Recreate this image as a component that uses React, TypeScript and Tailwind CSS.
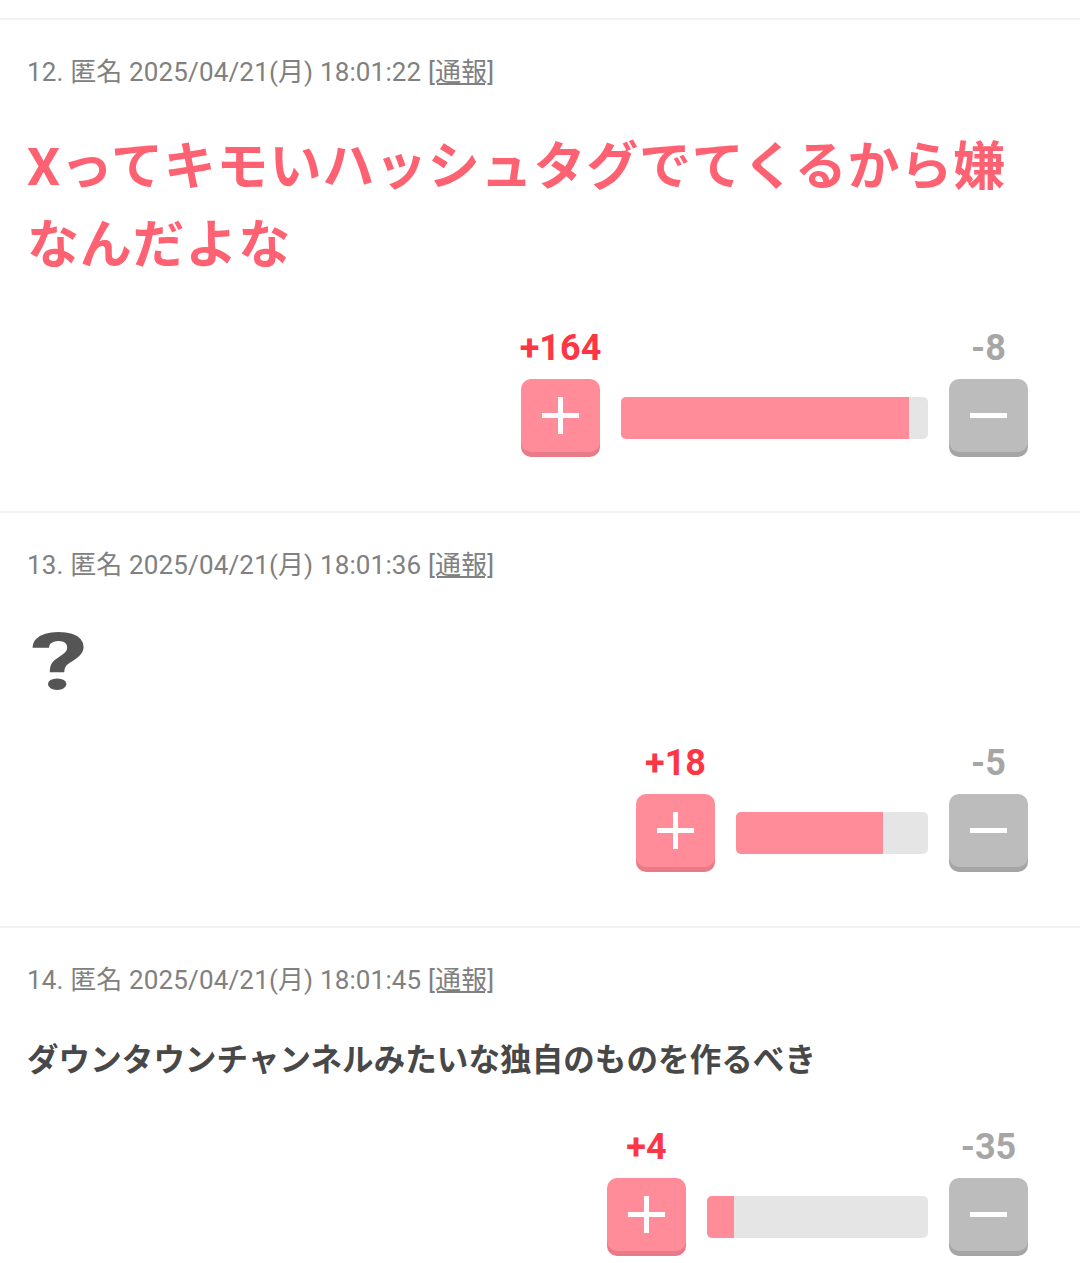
import React from "react";

type Comment = {
  no: number;
  time: string;
  up: number;
  down: number;
  barW: number;
  fillW: number;
  body: React.ReactNode;
};

const FONT = { fontFamily: '"Roboto", "Noto Sans CJK JP", sans-serif' };

function PlusIcon() {
  return (
    <svg width="37" height="37" viewBox="0 0 37 37">
      <rect x="16" y="0" width="5" height="37" fill="#fff" />
      <rect x="0" y="16" width="37" height="5" fill="#fff" />
    </svg>
  );
}

function MinusIcon() {
  return (
    <svg width="37" height="5" viewBox="0 0 37 5">
      <rect x="0" y="0" width="37" height="5" fill="#fff" />
    </svg>
  );
}

function Votes({ c }: { c: Comment }) {
  return (
    <div className="mt-[41px] flex justify-end pr-[25px]">
      <div className="flex flex-col">
        <div className="flex h-[44px] justify-between">
          <div className="flex w-[79px] justify-center whitespace-nowrap text-[36px] font-bold leading-[44px] text-[#fd3645]">
            +{c.up}
          </div>
          <div className="flex w-[79px] justify-center whitespace-nowrap text-[36px] font-bold leading-[44px] text-[#a6a6a6]">
            -{c.down}
          </div>
        </div>
        <div className="mt-[9px] flex items-center gap-[21px]">
          <div className="mb-[5px] flex h-[73px] w-[79px] items-center justify-center rounded-[10px] bg-[#ff8c98] shadow-[0_5px_0_#e87b87]">
            <PlusIcon />
          </div>
          <div
            className="flex h-[42px] overflow-hidden rounded-[5px] bg-[#e5e5e5]"
            style={{ width: c.barW }}
          >
            <div className="h-full bg-[#ff8c98]" style={{ width: c.fillW }} />
          </div>
          <div className="mb-[5px] flex h-[73px] w-[79px] items-center justify-center rounded-[10px] bg-[#bcbcbc] shadow-[0_5px_0_#a5a5a5]">
            <MinusIcon />
          </div>
        </div>
      </div>
    </div>
  );
}

function CommentBlock({ c }: { c: Comment }) {
  return (
    <div className="border-t-2 border-[#f2f2f2] px-[27px] pb-[54px] pt-[33px]">
      <div className="text-[26px] leading-[39px] tracking-[0.15px] text-[#808080]">
        {c.no}. 匿名 2025/04/21(月) {c.time} <span className="underline">[通報]</span>
      </div>
      <div className="mt-[37px]">{c.body}</div>
      <Votes c={c} />
    </div>
  );
}

const comments: Comment[] = [
  {
    no: 12,
    time: "18:01:22",
    up: 164,
    down: 8,
    barW: 307,
    fillW: 288,
    body: (
      <div className="text-[52px] font-bold leading-[78px] tracking-[0.8px] text-[#fe6272]">
        Xってキモいハッシュタグでてくるから嫌なんだよな
      </div>
    ),
  },
  {
    no: 13,
    time: "18:01:36",
    up: 18,
    down: 5,
    barW: 192,
    fillW: 147,
    body: (
      <div className="h-[78px] text-[52px] leading-[78px] text-[#555555]">
        <span className="inline-block origin-left translate-x-[3px] translate-y-[2px] scale-x-[1.45] text-[80px] font-bold leading-[78px]">
          ?
        </span>
      </div>
    ),
  },
  {
    no: 14,
    time: "18:01:45",
    up: 4,
    down: 35,
    barW: 221,
    fillW: 27,
    body: (
      <div className="text-[31.5px] font-bold leading-[47px] tracking-[0.1px] text-[#484848]">
        ダウンタウンチャンネルみたいな独自のものを作るべき
      </div>
    ),
  },
];

export default function App() {
  return (
    <div className="min-h-[1263px] w-[1080px] bg-white" style={FONT}>
      <div className="h-[18px]" />
      {comments.map((c) => (
        <CommentBlock key={c.no} c={c} />
      ))}
    </div>
  );
}
